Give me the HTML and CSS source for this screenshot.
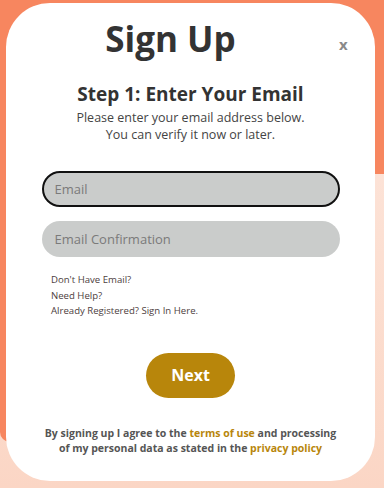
FILE: index.html
```html
<!DOCTYPE html>
<html lang="en">
<head>
<meta charset="utf-8">
<title>Sign Up</title>
<link rel="stylesheet" href="styles.css">
</head>
<body>
<div class="backdrop"></div>
<main class="card">
  <header class="card-header">
    <h1 class="title">Sign Up</h1>
    <button class="close" type="button">x</button>
  </header>
  <h2 class="step">Step 1: Enter Your Email</h2>
  <p class="intro">Please enter your email address below.<br>You can verify it now or later.</p>
  <form class="form">
    <input class="field field-active" type="email" placeholder="Email">
    <input class="field" type="email" placeholder="Email Confirmation">
  </form>
  <ul class="links">
    <li>Don't Have Email?</li>
    <li>Need Help?</li>
    <li>Already Registered? Sign In Here.</li>
  </ul>
  <div class="actions">
    <button class="next" type="button">Next</button>
  </div>
  <p class="legal">By signing up I agree to the <a href="#">terms of use</a> and processing<br>of my personal data as stated in the <a href="#">privacy policy</a></p>
</main>
</body>
</html>
```
FILE: styles.css
```css
html, body {
  margin: 0;
  padding: 0;
  width: 384px;
  height: 488px;
  overflow: hidden;
}
body {
  position: relative;
  background: linear-gradient(180deg, #fde9e0 0%, #fbd6c5 100%);
  font-family: "Open Sans", "Liberation Sans", sans-serif;
}
.backdrop {
  position: absolute;
  left: 0;
  top: 0;
  width: 384px;
  height: 174px;
  background: #f7865f;
  z-index: 0;
}
.backdrop::after {
  content: "";
  position: absolute;
  left: 0;
  top: 100px;
  width: 60px;
  height: 342px;
  background: #f7865f;
  border-bottom-left-radius: 10px;
}
.card {
  position: relative;
  z-index: 1;
  box-sizing: border-box;
  margin: 3px 9px 0 6px;
  width: 369px;
  height: 478px;
  background: #fff;
  border-radius: 44px;
  display: flex;
  flex-direction: column;
  align-items: center;
  padding: 11px 0 0;
}
.card-header {
  display: flex;
  align-items: center;
  width: 100%;
}
.title {
  flex: 1;
  margin: 0;
  padding-left: 18px;
  text-align: center;
  font-size: 35px;
  font-weight: 700;
  color: #333;
  line-height: 50px;
}
.close {
  width: 58px;
  padding: 0 0 0 22px;
  margin-top: 10px;
  border: 0;
  background: none;
  color: #8a8a8a;
  font-family: "Open Sans", sans-serif;
  font-weight: 700;
  font-size: 15px;
  text-align: left;
}
.step {
  margin: 17px 0 0;
  font-size: 19px;
  font-weight: 700;
  color: #333;
  line-height: 26px;
}
.intro {
  margin: 2px 0 0;
  text-align: center;
  font-size: 12.5px;
  line-height: 17px;
  color: #444;
}
.form {
  display: flex;
  flex-direction: column;
  gap: 14px;
  margin-top: 28px;
  width: 298px;
}
.field {
  box-sizing: border-box;
  width: 100%;
  height: 36px;
  border: 2px solid transparent;
  border-radius: 18px;
  background: #cacccb;
  padding: 0 11px;
  font-family: "Open Sans", sans-serif;
  font-size: 13px;
  color: #333;
  outline: none;
}
.field::placeholder {
  color: #7a7a7a;
}
.field-active {
  border-color: #111;
  caret-color: #b8860b;
}
.links {
  list-style: none;
  margin: 15px 0 0;
  padding: 0;
  align-self: flex-start;
  padding-left: 45px;
  font-size: 9.6px;
  line-height: 15.5px;
  color: #4d4040;
}
.actions {
  margin-top: 34px;
}
.next {
  width: 89px;
  height: 45px;
  border: 0;
  border-radius: 23px;
  background: #b8860b;
  color: #fff;
  font-family: "Open Sans", sans-serif;
  font-weight: 700;
  font-size: 16px;
}
.legal {
  margin: 28px 0 0;
  text-align: center;
  font-size: 10.5px;
  line-height: 15px;
  font-weight: 700;
  color: #555;
}
.legal a {
  color: #b8860b;
  text-decoration: none;
}
```
